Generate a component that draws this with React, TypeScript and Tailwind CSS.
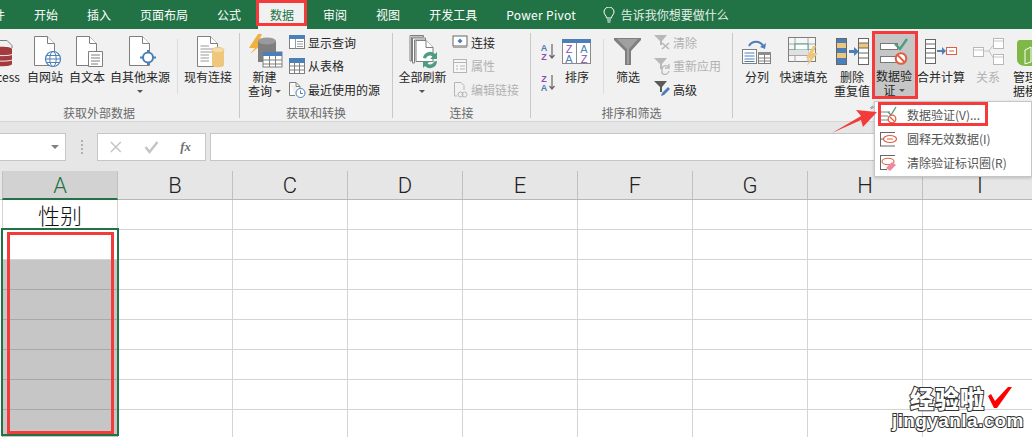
import React from "react";

const CJK = "font-['Microsoft_YaHei','Noto_Sans_CJK_SC','Noto_Sans',sans-serif]";
const GRAY = "#7f7f7f";
const BLUE = "#4a7fb8";
const TAN = "#efc77c";
const RED = "#df5f43";
const GREEN = "#4f9c84";

type IconProps = { w: number; h: number; children: React.ReactNode };
const Svg = ({ w, h, children }: IconProps) => (
  <svg width={w} height={h} viewBox={`0 0 ${w} ${h}`} className="shrink-0 block overflow-visible">
    {children}
  </svg>
);

// Sheet of paper with a folded corner
const Page = ({ x = 0.5, y = 0.5, w = 20, h = 29, c = GRAY }: { x?: number; y?: number; w?: number; h?: number; c?: string }) => (
  <>
    <path d={`M${x} ${y}H${x + w - 7}L${x + w} ${y + 7}V${y + h}H${x}Z`} fill="#fff" stroke={c} />
    <path d={`M${x + w - 7} ${y}V${y + 7}H${x + w}`} fill="#fff" stroke={c} />
  </>
);

const AccessIcon = () => (
  <Svg w={46} h={34}>
    <path d="M14 5.500H28L33 10.500V13" fill="none" stroke={GRAY} />
    <path d="M13 14C13 11 33 11 33 14V29C33 32 13 32 13 29Z" fill="#a33a3e" />
    <path d="M13 19.500C16 21 30 21 33 19.500M13 25C16 26.500 30 26.500 33 25" fill="none" stroke="#f1f1f1" />
  </Svg>
);

const WebIcon = () => (
  <Svg w={34} h={34}>
    <Page x={6.5} y={1.5} />
    <circle cx="25" cy="24" r="7.500" fill="#fff" stroke={BLUE} strokeWidth="1.200" />
    <ellipse cx="25" cy="24" rx="3.200" ry="7.500" fill="none" stroke={BLUE} />
    <path d="M17.500 24H32.500M18.500 20.500H31.500M18.500 27.500H31.500" stroke={BLUE} />
  </Svg>
);

const TextIcon = () => (
  <Svg w={34} h={34}>
    <Page x={6.5} y={1.500} />
    <path d="M18.500 16.500H32.500V31.500H18.500Z" fill="#fff" stroke={GRAY} />
    <path d="M21 20H30M21 23H30M21 26H30M21 29H28" stroke={GRAY} />
  </Svg>
);

const OtherIcon = () => (
  <Svg w={34} h={34}>
    <Page x={6.5} y={1.500} />
    <circle cx="25" cy="22.500" r="5" fill="#fff" stroke={BLUE} strokeWidth="2" />
    <path d="M25 15V18M25 27V30M17 22.500H20M30 22.500H33" stroke={BLUE} strokeWidth="2" />
  </Svg>
);

const ExistingIcon = () => (
  <Svg w={34} h={34}>
    <Page x={6.500} y={1.500} w={20} h={30} />
    <path d="M9.500 11H18M9.500 14H23.500M9.500 17H23.500M9.500 20H18M9.500 23H18M9.500 26H18" stroke="#9a9a9a" />
    <path d="M21 15V30C21 33 33 33 33 30V15Z" fill={TAN} />
    <ellipse cx="27" cy="15" rx="6" ry="2.500" fill="#f6dcaa" stroke={TAN} />
  </Svg>
);

const NewQueryIcon = () => (
  <Svg w={36} h={36}>
    <path d="M11 0L2 14H8L3 20L17 9H11L15 0Z" fill="#f1b13f" />
    <path d="M11 7V28H29V7Z" fill="#7f7f7f" />
    <ellipse cx="20" cy="7" rx="9" ry="3.500" fill="#9a9a9a" />
    <rect x="16" y="18" width="19" height="15" fill="#fff" stroke={GRAY} />
    <rect x="16" y="18" width="19" height="4" fill={BLUE} />
    <path d="M22.500 22V33M28.500 22V33M16 26H35M16 30H35" stroke={GRAY} />
  </Svg>
);

const ShowQueryIcon = () => (
  <Svg w={17} h={15}>
    <rect x="0.500" y="0.500" width="15" height="13" fill="#fff" stroke={GRAY} />
    <rect x="0.500" y="0.500" width="15" height="3" fill={BLUE} stroke={BLUE} />
    <path d="M6.500 4V13.500M8 6.500H14M8 9H14M8 11.500H14" stroke="#9a9a9a" />
  </Svg>
);

const TableIcon = () => (
  <Svg w={17} h={16}>
    <rect x="0.500" y="0.500" width="15" height="15" fill="#fff" stroke={GRAY} />
    <rect x="0.500" y="0.500" width="15" height="4" fill={BLUE} stroke={BLUE} />
    <path d="M5.500 4V15.500M10.500 4V15.500M1 8H15M1 12H15" stroke={GRAY} />
  </Svg>
);

const RecentIcon = () => (
  <Svg w={17} h={16}>
    <path d="M.5 .5H7L11 4.500V7M.5 .5V13.500H6" fill="#fff" stroke={GRAY} />
    <path d="M7 .5V4.500H11" fill="none" stroke={GRAY} />
    <circle cx="11.500" cy="11" r="4.500" fill="#fff" stroke={BLUE} />
    <path d="M11.500 8.500V11.500H14" fill="none" stroke={BLUE} />
  </Svg>
);

const RefreshAllIcon = () => (
  <Svg w={34} h={36}>
    <g transform="translate(3.500 1)">
      <path d="M.5 .5H14V2H2V26H.5Z M3 3H16V5H5V28H3Z" fill="#fff" stroke={GRAY} />
      <Page x={6.500} y={5.500} w={17} h={21} />
    </g>
    <g transform="translate(0 3)">
      <path d="M17 21A7 7 0 0 1 29 17L31 15V22H24L26.500 19.500A4 4 0 0 0 20 21.500Z" fill={GREEN} />
      <path d="M31 24A7 7 0 0 1 19 29L17 31V24H24L21.500 26.500A4 4 0 0 0 28 24.500Z" fill={GREEN} />
    </g>
  </Svg>
);

const ConnectionsIcon = () => (
  <Svg w={17} h={15}>
    <rect x="1" y="1" width="14" height="10" fill="#fff" stroke="#666" />
    <path d="M1 12H15" stroke="#aaa" strokeWidth="2" />
    <path d="M8 3.500L10.500 6L8 8.500L5.500 6Z" fill={BLUE} />
  </Svg>
);

const PropsIcon = () => (
  <Svg w={17} h={16}>
    <rect x="1.500" y="1.500" width="13" height="13" fill="#f7f7f7" stroke="#b5b5b5" />
    <path d="M1.500 4.500H14.500" stroke="#b5b5b5" />
    <path d="M4 8H6M4 11H6M8 8H13M8 11H13" stroke="#b5b5b5" />
  </Svg>
);

const LinksIcon = () => (
  <Svg w={17} h={16}>
    <path d="M2.500 .5H9L12 3.500V8M2.500 .5V14H5" fill="none" stroke="#b5b5b5" />
    <circle cx="8.500" cy="12.500" r="2.500" fill="none" stroke="#b5b5b5" />
    <circle cx="12.500" cy="12.500" r="2.500" fill="none" stroke="#b5b5b5" />
  </Svg>
);

const DownArrow = ({ x }: { x: number }) => (
  <path d={`M${x} 1V15M${x - 2.500} 12L${x} 15L${x + 2.500} 12`} fill="none" stroke="#666" strokeWidth="1.200" />
);

const Letters = ({ x, top, bottom, size = 9 }: { x: number; top: [string, string]; bottom: [string, string]; size?: number }) => (
  <>
    <text x={x} y={size - 1} fontSize={size} fontWeight="700" textAnchor="middle" fontFamily="Liberation Sans" fill={top[1]}>
      {top[0]}
    </text>
    <text x={x} y={size * 2 - 1} fontSize={size} fontWeight="700" textAnchor="middle" fontFamily="Liberation Sans" fill={bottom[1]}>
      {bottom[0]}
    </text>
  </>
);

const SortAZ = () => (
  <Svg w={16} h={17}>
    <Letters x={4} top={["A", BLUE]} bottom={["Z", "#8e4fb0"]} />
    <DownArrow x={12} />
  </Svg>
);

const SortZA = () => (
  <Svg w={16} h={17}>
    <Letters x={4} top={["Z", "#8e4fb0"]} bottom={["A", BLUE]} />
    <DownArrow x={12} />
  </Svg>
);

const SortIcon = () => (
  <Svg w={30} h={26}>
    <rect x="0.500" y="0.500" width="28" height="24" fill="#fff" stroke="#8a8a8a" />
    <rect x="0" y="0" width="29" height="4" fill={BLUE} />
    <path d="M14.500 4V25" stroke="#8a8a8a" />
    <text x="7" y="14" fontSize="11" fontFamily="Liberation Sans" textAnchor="middle" fill="#8e4fb0">Z</text>
    <text x="7" y="24" fontSize="11" fontFamily="Liberation Sans" textAnchor="middle" fill={BLUE}>A</text>
    <text x="22" y="14" fontSize="11" fontFamily="Liberation Sans" textAnchor="middle" fill={BLUE}>A</text>
    <text x="22" y="24" fontSize="11" fontFamily="Liberation Sans" textAnchor="middle" fill="#8e4fb0">Z</text>
  </Svg>
);

const FunnelIcon = () => (
  <Svg w={28} h={28}>
    <path d="M0 0H27V2L17 13V27H11V13L0 2Z" fill="#7f7f7f" />
    <path d="M3 1H24L15 11V26H13V11Z" fill="#a0a0a0" />
  </Svg>
);

const ClearIcon = () => (
  <Svg w={17} h={16}>
    <path d="M0 0H13L8 6V10H6V6Z" fill="#b8b8b8" />
    <path d="M8 8L15 14M15 8L8 14" stroke="#b8b8b8" strokeWidth="1.600" />
  </Svg>
);

const ReapplyIcon = () => (
  <Svg w={17} h={17}>
    <path d="M0 0H13L8 6V11H6V6Z" fill="#b8b8b8" />
    <path d="M8 12A4 4 0 0 1 15 9M15 6V10H11M15 13A4 4 0 0 1 8 15M8 12V16" fill="none" stroke="#b8b8b8" strokeWidth="1.300" />
  </Svg>
);

const AdvancedIcon = () => (
  <Svg w={17} h={17}>
    <path d="M0 0H13L8 6V11H6V6Z" fill="#5a5a5a" />
    <path d="M7 15L8 12L14 6L16 8L10 14Z" fill={BLUE} />
  </Svg>
);

const SplitIcon = () => (
  <Svg w={32} h={26}>
    <path d="M8 7A8 8 0 0 1 22 7" fill="none" stroke={BLUE} strokeWidth="2" />
    <path d="M24 10L19 8L25 4Z" fill={BLUE} />
    <rect x="1.500" y="10.500" width="14" height="14" fill="#fff" stroke={GRAY} />
    <path d="M3.500 14H13.500M3.500 17H13.500M3.500 20H13.500M3.500 22.500H13.500" stroke={BLUE} />
    <rect x="17.500" y="13.500" width="12" height="11" fill="#fff" stroke={GRAY} />
    <rect x="17" y="13" width="13" height="3" fill="#8c8c8c" />
    <path d="M23.500 16V24M18 19H29M18 22H29" stroke={GRAY} />
  </Svg>
);

const FlashFillIcon = () => (
  <Svg w={31} h={30}>
    <rect x="0.500" y="0.500" width="27" height="24" fill="#f6f6f6" stroke={GRAY} />
    <path d="M7 1V25M20 1V25M1 7H27M1 12.500H27M1 18.500H27" stroke="#a8a8a8" />
    <rect x="7" y="7" width="13" height="6" fill="#fff" stroke={GREEN} />
    <rect x="1" y="13" width="19" height="5" fill="#e1e1e1" />
    <path d="M25 9L18 21H22L19 29L30 16H25L28 9Z" fill={TAN} />
  </Svg>
);

const DuplicatesIcon = () => (
  <Svg w={33} h={28}>
    <rect x="0.500" y="0.500" width="10" height="26" fill={BLUE} stroke="#666" />
    <rect x="1" y="5" width="9" height="5" fill={TAN} />
    <rect x="1" y="15" width="9" height="5" fill={TAN} />
    <path d="M13 12H18V9L23 13.500L18 18V15H13Z" fill={BLUE} />
    <rect x="22.500" y="0.500" width="10" height="26" fill="#fff" stroke="#666" />
    <rect x="23" y="5" width="9" height="5" fill={TAN} />
    <path d="M23 15H32M23 20H32M23 5H32M23 10H32" stroke="#666" />
  </Svg>
);

const ValidationIcon = () => (
  <Svg w={30} h={28}>
    <rect x="-0.500" y="5.500" width="17" height="6" fill="#fff" stroke="#777" />
    <rect x="-0.500" y="18.500" width="17" height="6" fill="#fff" stroke="#777" />
    <path d="M14 6L19 11L26 1" fill="none" stroke={GREEN} strokeWidth="2.400" />
    <circle cx="20" cy="20.500" r="5.300" fill="#fff" stroke={RED} strokeWidth="2" />
    <path d="M16.500 17L23.500 24" stroke={RED} strokeWidth="2" />
  </Svg>
);

const ConsolidateIcon = () => (
  <Svg w={32} h={26}>
    <rect x="0.500" y="0.500" width="10" height="24" fill="#fff" stroke="#666" />
    <path d="M1 5H10M1 9.500H10M1 14H10M1 19H10" stroke="#666" />
    <path d="M12 11H17V8L21 12L17 16V13H12Z" fill={BLUE} />
    <rect x="21.500" y="8.500" width="10" height="7" fill="#fff" stroke={RED} />
    <path d="M24 12H29" stroke={RED} />
  </Svg>
);

const RelationsIcon = () => (
  <Svg w={31} h={28}>
    <path d="M11 13H16L21 6M16 13L21 21" fill="none" stroke="#c4c4c4" />
    <rect x="0.500" y="9.500" width="10" height="9" fill="#fff" stroke="#b9b9b9" />
    <rect x="20.500" y="0.500" width="10" height="10" fill="#fff" stroke="#b9b9b9" />
    <rect x="20.500" y="16.500" width="10" height="10" fill="#fff" stroke="#b9b9b9" />
    <path d="M1 12H10M21 3H30M21 19H30" stroke="#c4c4c4" />
  </Svg>
);

const ModelIcon = () => (
  <Svg w={28} h={28}>
    <path d="M3 2H22C25 2 26 4 26 6V24C26 26 25 28 22 28H8C4 28 0 25 0 22V6C0 3 1 2 3 2Z" fill="#7fb846" />
    <path d="M8 12L14 9V24L8 26ZM16 9L22 11V21L16 24Z" fill="none" stroke="#fff" />
  </Svg>
);

const MenuCheckIcon = () => (
  <Svg w={18} h={18}>
    <path d="M0 6H10M0 10H8M0 14H8" stroke="#7f7f7f" />
    <path d="M8 6L11 9L16 1" fill="none" stroke={GREEN} strokeWidth="1.400" />
    <circle cx="12" cy="13" r="3.800" fill="#fff" stroke={RED} strokeWidth="1.300" />
    <path d="M9.500 10.500L14.500 15.500" stroke={RED} strokeWidth="1.300" />
  </Svg>
);

const MenuCircleIcon = () => (
  <Svg w={18} h={15}>
    <path d="M.5 0V14.500M.5 .5H15M.5 14H15M.5 7H4" fill="none" stroke="#666" />
    <ellipse cx="10" cy="7" rx="6.500" ry="3.500" fill="#fff" stroke={RED} strokeWidth="1.200" />
    <path d="M7 7H13" stroke={RED} />
  </Svg>
);

const MenuEraseIcon = () => (
  <Svg w={18} h={16}>
    <path d="M.5 0V15M.5 .5H15M.5 14.500H7" fill="none" stroke="#666" />
    <ellipse cx="8" cy="6.500" rx="6" ry="3.200" fill="#fff" stroke={RED} strokeWidth="1.100" />
    <path d="M6 13L12 7L16 10L10 16Z" fill="#ee8aa0" />
  </Svg>
);

const Caret = () => <span className="inline-block w-0 h-0 border-x-[3px] border-x-transparent border-t-[3px] border-t-[#555]" />;

const Big = ({
  w,
  icon,
  lines,
  caret,
  inlineCaret,
  disabled,
  cls = "",
  textCls = "",
}: {
  w: string;
  icon: React.ReactNode;
  lines: string[];
  caret?: boolean;
  inlineCaret?: boolean;
  disabled?: boolean;
  cls?: string;
  textCls?: string;
}) => (
  <div className={`flex flex-col items-center pt-[3px] shrink-0 ${w} ${cls}`}>
    <div className="h-[36px] flex items-center justify-center">{icon}</div>
    <div className={`text-[12px] leading-[14px] text-center whitespace-nowrap ${textCls} ${disabled ? "text-[#b1b1b1]" : "text-[#262626]"}`}>
      {lines.map((l, i) => (
        <div key={l} className="flex items-center justify-center gap-[3px] h-[14px]">
          {l}
          {inlineCaret && i === lines.length - 1 && <Caret />}
        </div>
      ))}
      {caret && (
        <div className="flex justify-center items-center h-[14px]">
          <Caret />
        </div>
      )}
    </div>
  </div>
);

const Small = ({ icon, label, disabled }: { icon: React.ReactNode; label: string; disabled?: boolean }) => (
  <div className={`flex items-center h-[23.5px] gap-[1px] text-[12px] whitespace-nowrap ${disabled ? "text-[#b1b1b1]" : "text-[#262626]"}`}>
    <div className="w-[18px] flex justify-start">{icon}</div>
    {label}
  </div>
);

const Sep = () => <div className="w-px my-[8px] h-[55px] bg-[#dcdcdc] shrink-0" />;

const Group = ({ cls, label, labelCls = "", children }: { cls: string; label?: string; labelCls?: string; children: React.ReactNode }) => (
  <div className={`flex flex-col shrink-0 ${cls}`}>
    <div className="flex h-[74px]">{children}</div>
    <div className={`h-[16px] leading-[16px] text-[12px] text-center text-[#6a6a6a] whitespace-nowrap ${labelCls}`}>{label}</div>
  </div>
);

const Divider = () => <div className="w-px h-[85px] mt-[2px] bg-[#c8c8c8] shrink-0" />;

const tabs = ["文件", "开始", "插入", "页面布局", "公式", "数据", "审阅", "视图", "开发工具", "Power Pivot"];
const cols = ["A", "B", "C", "D", "E", "F", "G", "H", "I"];
const rows = [0, 1, 2, 3, 4, 5, 6, 7];

export default function App() {
  return (
    <div className={`relative w-[1032px] h-[437px] overflow-hidden bg-white ${CJK}`}>
      {/* Title tabs */}
      <div className="flex items-stretch h-[29px] bg-[#217346] text-white text-[12px] gap-[4px] ml-[-31.500px]">
        {tabs.map((t) => (
          <div
            key={t}
            className={`flex items-center px-[12.500px] whitespace-nowrap ${t === "数据" ? "bg-[#f1f1f1] text-[#217346]" : ""} ${t === "Power Pivot" ? "tracking-[0.3px]" : ""}`}
          >
            {t}
          </div>
        ))}
        <div className="flex items-center gap-[6px] ml-[10px] text-[#e4efe9] whitespace-nowrap">
          <svg width="12" height="16" viewBox="0 0 12 16" fill="none" stroke="#fff" strokeWidth="1">
            <path d="M3.500 11C3.500 8.500 1 7.500 1 5A5 5 0 0 1 11 5C11 7.500 8.500 8.500 8.500 11ZM4 13H8M4.500 15H7.500" />
          </svg>
          告诉我你想要做什么
        </div>
      </div>

      {/* Ribbon */}
      <div className="flex h-[93px] pt-[2px] bg-[#f1f1f1] border-b border-[#d6d6d6] ml-[-23px]">
        <Group cls="w-[262px]" label="获取外部数据" labelCls="pr-[18px]">
          <Big w="w-[46px]" cls="pl-[3px]" icon={<AccessIcon />} lines={["Access"]} />
          <Big w="w-[44px]" icon={<WebIcon />} lines={["自网站"]} />
          <Big w="w-[40px]" icon={<TextIcon />} lines={["自文本"]} />
          <Big w="w-[66px]" icon={<OtherIcon />} lines={["自其他来源"]} caret />
          <div className="pl-[4px]">
            <Sep />
          </div>
          <Big w="w-[60px]" icon={<ExistingIcon />} lines={["现有连接"]} />
        </Group>
        <Divider />
        <Group cls="w-[152px]" label="获取和转换">
          <Big w="w-[49px]" icon={<NewQueryIcon />} lines={["新建", "查询"]} inlineCaret />
          <div className="flex flex-col">
            <Small icon={<ShowQueryIcon />} label="显示查询" />
            <Small icon={<TableIcon />} label="从表格" />
            <Small icon={<RecentIcon />} label="最近使用的源" />
          </div>
        </Group>
        <Divider />
        <Group cls="w-[137px]" label="连接">
          <Big w="w-[59px]" icon={<RefreshAllIcon />} lines={["全部刷新"]} caret />
          <div className="flex flex-col">
            <Small icon={<ConnectionsIcon />} label="连接" />
            <Small icon={<PropsIcon />} label="属性" disabled />
            <Small icon={<LinksIcon />} label="编辑链接" disabled />
          </div>
        </Group>
        <Divider />
        <Group cls="w-[201px]" label="排序和筛选">
          <div className="w-[31px] flex flex-col items-center shrink-0 pl-[3px] pt-[12px] gap-[14px]">
            <SortAZ />
            <SortZA />
          </div>
          <Big w="w-[30px]" icon={<SortIcon />} lines={["排序"]} />
          <div className="pl-[11px]">
            <Sep />
          </div>
          <Big w="w-[48px]" icon={<FunnelIcon />} lines={["筛选"]} />
          <div className="flex flex-col pl-[2px]">
            <Small icon={<ClearIcon />} label="清除" disabled />
            <Small icon={<ReapplyIcon />} label="重新应用" disabled />
            <Small icon={<AdvancedIcon />} label="高级" />
          </div>
        </Group>
        <Divider />
        <Group cls="w-[320px]">
          <Big w="w-[32px]" cls="ml-[8px]" icon={<SplitIcon />} lines={["分列"]} />
          <Big w="w-[61px]" icon={<FlashFillIcon />} lines={["快速填充"]} />
          <Big w="w-[36px]" icon={<DuplicatesIcon />} lines={["删除", "重复值"]} />
          <Big w="w-[42px]" cls="ml-[5px] bg-[#c6c6c6] h-[66px]" textCls="pr-[4px]" icon={<ValidationIcon />} lines={["数据验", "证"]} inlineCaret />
          <Big w="w-[48px]" icon={<ConsolidateIcon />} lines={["合并计算"]} />
          <Big w="w-[46px]" icon={<RelationsIcon />} lines={["关系"]} disabled />
          <Big w="w-[36px]" cls="ml-[2px]" icon={<ModelIcon />} lines={["管理数", "据模型"]} />
        </Group>
      </div>

      {/* Formula bar */}
      <div className="flex h-[49px] bg-[#e6e6e6] pt-[11px] text-[#9a9a9a]">
        <div className="flex items-center justify-end w-[67px] h-[28px] bg-white border border-[#c6c6c6] ml-[-1px] pr-[6px]">
          <span className="w-0 h-0 border-x-[4px] border-x-transparent border-t-[4px] border-t-[#808080]" />
        </div>
        <div className="w-[31px] h-[28px] flex flex-col items-center justify-center gap-[2px]">
          <span className="w-[2px] h-[2px] bg-[#b0b0b0]" />
          <span className="w-[2px] h-[2px] bg-[#b0b0b0]" />
          <span className="w-[2px] h-[2px] bg-[#b0b0b0]" />
          <span className="w-[2px] h-[2px] bg-[#b0b0b0]" />
        </div>
        <div className="flex items-center w-[109px] h-[28px] bg-white border border-[#c6c6c6] relative">
          <svg width="108" height="26" viewBox="0 0 108 26" fill="none">
            <path d="M13 8L23 18M23 8L13 18" stroke="#c4c4c4" strokeWidth="1.500" />
            <path d="M48 13L52 18L60 8" stroke="#c4c4c4" strokeWidth="2.500" />
            <text x="83" y="17" fontSize="13" fontStyle="italic" fontWeight="700" fontFamily="Liberation Serif" fill="#707070">
              fx
            </text>
          </svg>
        </div>
        <div className="ml-[4px] flex-1 h-[28px] bg-white border border-[#c6c6c6]" />
      </div>

      {/* Column headers */}
      <div className="flex h-[29px] bg-[#e6e6e6] border-b border-[#b8b8b8] pl-[2px]">
        {cols.map((c, i) => (
          <div
            key={c}
            className={`shrink-0 text-center text-[22px] leading-[30px] font-light font-['Roboto','Liberation_Sans',sans-serif] border-r border-[#c0c0c0] ${
              i === 0 ? "w-[116px] bg-[#d2d2d2] text-[#217346] border-b-2 border-b-[#217346] border-l h-[29px]" : "w-[115px] text-[#222]"
            }`}
          >
            {c}
          </div>
        ))}
      </div>

      {/* Cell grid */}
      {rows.map((r) => (
        <div key={r} className="flex h-[30px] pl-[2px]">
          {cols.map((c, i) => (
            <div
              key={c}
              className={`shrink-0 border-r border-b ${
                i === 0 && r >= 2 ? "bg-[#c6c6c6] border-[#a8a8a8]" : "border-[#d4d4d4]"
              } ${i === 0 ? "w-[116px] border-l text-center text-[22px] leading-[28px] font-light text-[#111]" : "w-[115px]"}`}
            >
              {i === 0 && r === 0 ? "性别" : ""}
            </div>
          ))}
        </div>
      ))}

      {/* Selection frame around the column */}
      <div className="absolute left-[1px] top-[228px] w-[118px] h-[208px] border-2 border-[#217346]" />
      <div className="absolute left-[3px] top-[230px] w-[114px] h-[29px] bg-white" />
      <div className="absolute left-[7px] top-[232px] w-[107px] h-[202px] border-[3px] border-[#f33b3b]" />

      {/* Highlight on the 数据 tab */}
      <div className="absolute left-[256px] top-0 w-[51px] h-[26px] border-[3px] border-[#f33b3b]" />

      {/* Highlight on the data validation button */}
      <div className="absolute left-[872px] top-[31px] w-[46px] h-[68px] border-[3px] border-[#f33b3b]" />

      {/* Data validation drop-down */}
      <div className="absolute left-[874px] top-[101px] w-[158px] h-[76px] bg-white border border-[#c6c6c6] shadow-[0_1px_3px_rgba(0,0,0,0.2)] flex flex-col pt-[1px] text-[12px] text-[#555] whitespace-nowrap">
        {[
          [<MenuCheckIcon key="a" />, "数据验证(V)..."],
          [<MenuCircleIcon key="b" />, "圆释无效数据(I)"],
          [<MenuEraseIcon key="c" />, "清除验证标识圈(R)"],
        ].map(([icon, text], i) => (
          <div key={i} className="flex items-center h-[24px] pl-[5px] gap-[9px]">
            <div className="w-[18px] shrink-0">{icon}</div>
            {text}
          </div>
        ))}
      </div>
      <div className="absolute left-[878px] top-[102px] w-[110px] h-[24px] border-[3px] border-[#f33b3b]" />

      {/* Pointer towards the menu entry */}
      <svg className="absolute left-[830px] top-[105px]" width="50" height="30" viewBox="0 0 50 30">
        <path d="M2 28L31 11L26 5L47 7L33 22L31 15Z" fill="#f33b3b" />
        <path d="M40 3L43 1M41 4L44 2" stroke="#8a8a8a" />
      </svg>

      {/* Site mark */}
      <div className="absolute left-[892px] top-[384px] w-[130px] text-white font-black leading-none [paint-order:stroke_fill] [-webkit-text-stroke:2px_#333]">
        <div className="flex items-center pl-[18px] h-[27px]">
          <span className="text-[24px] tracking-[1px] [paint-order:stroke_fill]">经验啦</span>
        </div>
        <div className="text-[19px] font-['Liberation_Sans',sans-serif] font-bold tracking-[0.4px] [paint-order:stroke_fill]">jingyanla.com</div>
      </div>
      <svg className="absolute left-[986px] top-[385px]" width="26" height="26" viewBox="0 0 26 26">
        <path d="M2 11L5 9L9 16L22 2H26L11 23H8Z" fill="#f00" />
      </svg>
    </div>
  );
}
